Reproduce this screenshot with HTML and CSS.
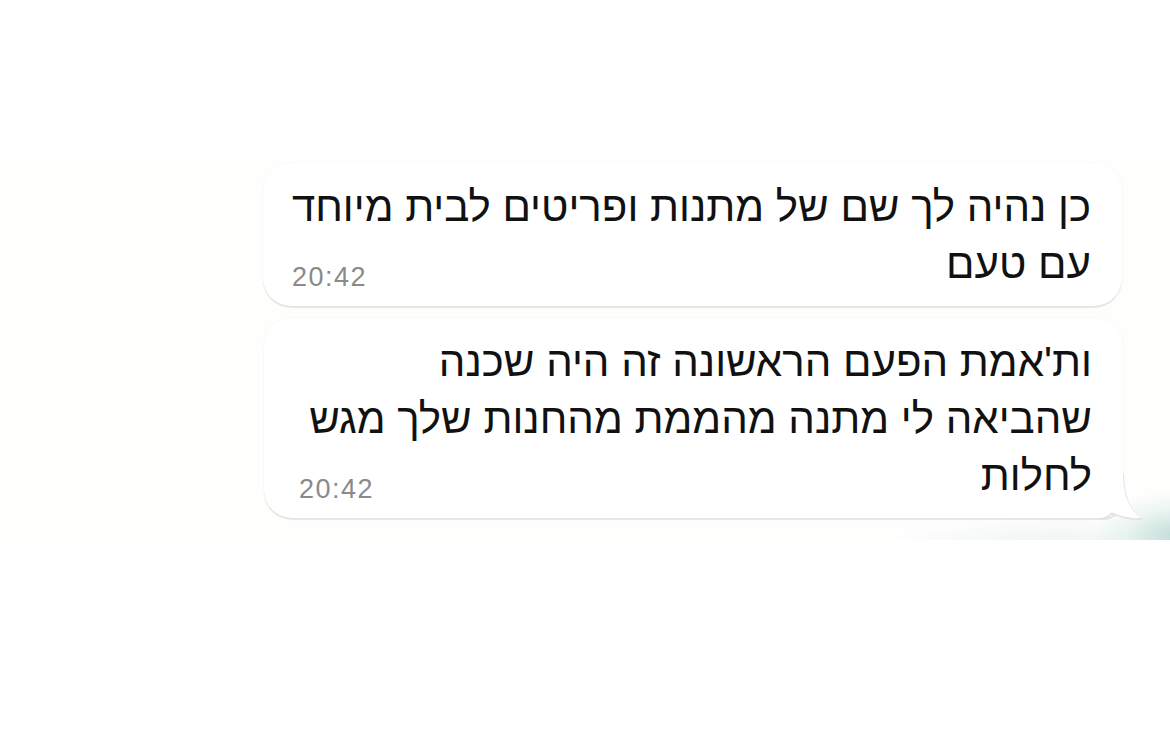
FILE: index.html
```html
<!DOCTYPE html>
<html lang="he" dir="rtl">
<head>
  <meta charset="UTF-8" />
  <meta name="viewport" content="width=device-width, initial-scale=1.0"/>
  <title>צ'אט</title>
  <link rel="stylesheet" href="styles.css">
</head>
<body>
  <main class="chat">
    <div class="bubble">
      <p class="text">כן נהיה לך שם של מתנות ופריטים לבית מיוחד<br>עם טעם</p>
      <span class="time">20:42</span>
    </div>

    <div class="bubble last">
      <p class="text">ות'אמת הפעם הראשונה זה היה שכנה<br>שהביאה לי מתנה מהממת מהחנות שלך מגש<br>לחלות</p>
      <span class="time">20:42</span>
      <!-- tail on the last bubble of the group -->
      <svg class="tail" width="40" height="45" viewBox="0 0 40 45">
        <path d="M22 1 C22 23 28 37 40 46 C30 46.5 18 44 11 40 C8 43 4 45.5 -2 46" fill="none" stroke="#e4e4e4" stroke-width="2"/>
        <path d="M0 0 L22 0 C22 22 28 36 40 45 C30 45.5 18 43 11 39 C8 42 4 44.5 -2 45 Z" fill="#fff"/>
      </svg>
    </div>
  </main>
</body>
</html>
```

FILE: styles.css
```css
:root {
  --wall: #fefefd;
  --bubble: #ffffff;
  --text: #111;
  --muted: #8a8a8a;
}

body {
  margin: 0;
  background: #fff;
  font-family: 'Liberation Sans', 'DejaVu Sans', sans-serif;
  color: var(--text);
}

.chat {
  margin-top: 160px;
  height: 380px;
  background:
    radial-gradient(ellipse 80px 45px at 1175px 375px, rgba(165, 205, 198, 0.65), rgba(200, 226, 220, 0.3) 60%, transparent 100%),
    radial-gradient(ellipse 170px 30px at 1060px 385px, rgba(210, 230, 224, 0.4), transparent 100%),
    var(--wall);
  display: flex;
  flex-direction: column;
  align-items: flex-start;
  gap: 12px;
  padding: 3px 48px 0 0;
  box-sizing: border-box;
}

.bubble {
  position: relative;
  width: 859px;
  box-sizing: border-box;
  background: var(--bubble);
  border-radius: 28px;
  box-shadow: 0 2px 1px rgba(0, 0, 0, 0.09), 0 0 3px rgba(0, 0, 0, 0.04);
  display: grid;
  grid-template-areas: "msg";
  padding: 15px 31px 14px 35px;
}

.bubble.last {
  margin-right: -1px;
  border-bottom-right-radius: 20px;
}

.text {
  grid-area: msg;
  justify-self: start;
  margin: 0;
  font-size: 42px;
  line-height: 57px;
  white-space: nowrap;
}

.time {
  grid-area: msg;
  justify-self: end;
  align-self: end;
  font-size: 27px;
  color: var(--muted);
  letter-spacing: 1.5px;
  line-height: 30px;
  direction: ltr;
}

.tail {
  position: absolute;
  right: -18px;
  bottom: 0;
  overflow: visible;
}
```
